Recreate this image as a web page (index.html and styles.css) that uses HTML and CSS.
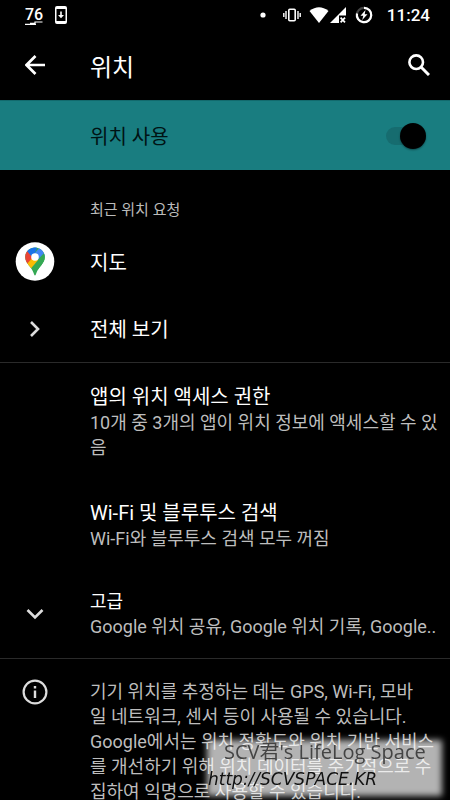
FILE: index.html
```html
<!DOCTYPE html>
<html lang="ko">
<head>
<meta charset="utf-8">
<meta name="viewport" content="width=device-width, initial-scale=1">
<title>위치</title>
<link rel="stylesheet" href="styles.css">
</head>
<body>
<div class="screen">
  <div class="status">
    <div class="status-group">
      <span class="battery">76
        <svg class="battery-mark" width="18" height="4" viewBox="0 0 18 4"><path d="M0 3.3H11M5 2.4H10V1H17.5" stroke="#fff" stroke-width="1.2" fill="none"/></svg>
      </span>
      <svg width="12" height="18" viewBox="0 0 12 18"><path fill="#fff" fill-rule="evenodd" d="M2 0H10Q12 0 12 2V16Q12 18 10 18H2Q0 18 0 16V2Q0 0 2 0ZM1.5 3V15H10.5V3Z"/><path fill="#fff" d="M5.2 5.5H6.8V9H9L6 12.2 3 9H5.2Z"/></svg>
    </div>
    <div class="status-group status-right">
      <svg class="icon-dot" width="6" height="6" viewBox="0 0 6 6"><circle cx="3" cy="3" r="2.6" fill="#fff"/></svg>
      <svg class="icon-vibrate" width="18" height="14" viewBox="0 0 18 14"><rect x="5.8" y="1.2" width="6.4" height="11.6" rx="1" fill="none" stroke="#fff" stroke-width="1.6"/><path d="M3 3V11M15 3V11M.8 5V9M17.2 5V9" stroke="#fff" stroke-width="1.4"/></svg>
      <svg class="icon-wifi" width="20" height="16" viewBox="0 0 20 16"><path d="M.5 4Q10-3.5 19.5 4L10 16Z" fill="#fff"/></svg>
      <svg class="icon-signal" width="16" height="16" viewBox="0 0 16 16"><path d="M0 16 16 0V8.5H9V16Z" fill="#fff"/><path d="M10.6 10.6 15 15.4M15 10.6 10.6 15.4" stroke="#fff" stroke-width="1.7"/></svg>
      <svg class="icon-charge" width="18" height="18" viewBox="0 0 18 18"><circle cx="9" cy="9" r="7.2" fill="none" stroke="#444" stroke-width="2.2"/><path d="M9 1.8A7.2 7.2 0 1 1 2 7.5" fill="none" stroke="#fff" stroke-width="2.2"/><path d="M10.5 4 5.5 9.8H8.3L7.2 14 12.5 8.2H9.7Z" fill="#fff"/></svg>
      <time class="clock">11:24</time>
    </div>
  </div>

  <header class="toolbar">
    <button class="icon-button" type="button" aria-label="뒤로">
      <svg width="20" height="20" viewBox="0 0 20 20"><path d="M20 10H2M10.5 1 1.5 10 10.5 19" fill="none" stroke="#fff" stroke-width="2.7"/></svg>
    </button>
    <h1>위치</h1>
    <button class="icon-button search" type="button" aria-label="검색">
      <svg width="22" height="22" viewBox="0 0 22 22"><circle cx="8.2" cy="8.2" r="6.8" fill="none" stroke="#fff" stroke-width="2.6"/><path d="M13 13 21 21" stroke="#fff" stroke-width="3"/></svg>
    </button>
  </header>

  <label class="banner">
    <span class="title">위치 사용</span>
    <input class="switch" type="checkbox" role="switch" checked>
  </label>

  <main>
    <h2 class="category">최근 위치 요청</h2>
    <a class="row" href="#maps">
      <span class="lead">
        <svg width="40" height="40" viewBox="0 0 40 40"><circle cx="20" cy="19.5" r="19.3" fill="#fff"/>
          <clipPath id="pin"><path d="M20 5.5C14.4 5.5 10.2 9.8 10.2 15.1C10.2 18.3 11.6 20.6 13.5 23C15.7 25.8 17.8 28.2 18.8 31.6C19.1 32.7 19.4 33.5 20 33.5S20.9 32.7 21.2 31.6C22.2 28.2 24.3 25.8 26.5 23C28.4 20.6 29.8 18.3 29.8 15.1C29.8 9.8 25.6 5.5 20 5.5Z"/></clipPath>
          <g clip-path="url(#pin)"><path fill="#34a853" d="M9 5H31V34H9Z"/><path fill="#fbbc04" d="M9 23 18 12 23.5 17.5 13 30Z"/><path fill="#ea4335" d="M9 7 13 8.5 19 14 11.5 22.5 8 19Z"/><path fill="#1a73e8" d="M12 9 14 4H23L19 13 17 15Z"/><path fill="#4285f4" d="M17 14.5 24.5 5.5 32 8V11L25 19Z"/><path fill="#34a853" d="M23 17.5 29.1 11 31 18 23 29Z"/></g>
          <circle cx="20" cy="15" r="3.8" fill="#fff"/>
        </svg>
      </span>
      <span class="title">지도</span>
    </a>
    <a class="row" href="#all">
      <span class="lead"><svg width="10" height="16" viewBox="0 0 10 16"><path d="M1 1 8 8 1 15" fill="none" stroke="#ddd" stroke-width="2.6"/></svg></span>
      <span class="title">전체 보기</span>
    </a>
    <hr>
    <a class="row tall" href="#permission">
      <span class="lead"></span>
      <span class="text"><span class="title">앱의 위치 액세스 권한</span><span class="summary">10개 중 3개의 앱이 위치 정보에 액세스할 수 있음</span></span>
    </a>
    <a class="row tall" href="#scan">
      <span class="lead"></span>
      <span class="text"><span class="title">Wi-Fi 및 블루투스 검색</span><span class="summary">Wi-Fi와 블루투스 검색 모두 꺼짐</span></span>
    </a>
    <button class="row advanced" type="button">
      <span class="lead"><svg width="18" height="11" viewBox="0 0 18 11"><path d="M1.5 1 9 8.5 16.5 1" fill="none" stroke="#ddd" stroke-width="2.6"/></svg></span>
      <span class="text"><span class="subtitle">고급</span><span class="summary">Google 위치 공유, Google 위치 기록, Google..</span></span>
    </button>
    <hr>
    <section class="row info">
      <span class="lead"><svg width="26" height="26" viewBox="0 0 26 26"><circle cx="13" cy="13" r="11.4" fill="none" stroke="#ddd" stroke-width="2.2"/><path d="M13 11.5V19M13 7V9.4" stroke="#ddd" stroke-width="2.4"/></svg></span>
      <p class="summary">기기 위치를 추정하는 데는 GPS, Wi-Fi, 모바<br>일 네트워크, 센서 등이 사용될 수 있습니다.<br>Google에서는 위치 정확도와 위치 기반 서비스<br>를 개선하기 위해 위치 데이터를 주기적으로 수<br>집하여 익명으로 사용할 수 있습니다.</p>
    </section>
  </main>

  <div class="watermark">
    <span class="mark-name">SCV君's LifeLog Space</span>
    <span class="mark-url">http://SCVSPACE.KR</span>
  </div>
</div>
</body>
</html>
```

FILE: styles.css
```css
* {
  box-sizing: border-box;
}

body {
  margin: 0;
  background: #000;
  color: #fff;
  font-family: Roboto, "Noto Sans CJK KR", sans-serif;
}

.screen {
  min-height: 100vh;
}

h1, h2, p {
  margin: 0;
  font-weight: 400;
}

button {
  border: 0;
  padding: 0;
  background: none;
  color: inherit;
  font: inherit;
  text-align: left;
}

svg {
  display: block;
  flex: none;
}

.status {
  display: flex;
  justify-content: space-between;
  height: 30px;
  padding: 0 20px 0 25px;
}

.status-group {
  display: flex;
  align-items: center;
  gap: 12px;
}

.status-right {
  gap: 0;
}

.battery {
  position: relative;
  font-size: 16px;
  font-weight: 500;
  line-height: 28px;
}

.battery-mark {
  position: absolute;
  left: 0;
  bottom: 4px;
}

.icon-dot { margin-right: 17px; }
.icon-vibrate { margin-right: 8px; }
.icon-wifi { margin-right: 1px; }
.icon-signal { margin-right: 9px; }
.icon-charge { margin-right: 14px; }

.clock {
  font-size: 17px;
  font-weight: 500;
}

.toolbar {
  display: flex;
  align-items: center;
  height: 70px;
  padding: 0 20px 0 25px;
}

.icon-button {
  display: flex;
  align-items: center;
  width: 65px;
  height: 48px;
}

.search {
  justify-content: flex-end;
  margin-left: auto;
}

h1 {
  font-size: 24px;
}

.banner {
  display: flex;
  align-items: center;
  justify-content: space-between;
  height: 70px;
  padding: 0 24px 0 90px;
  border-top: 1px solid #126a6d;
  background: #197d80;
  color: #001314;
}

.switch {
  appearance: none;
  display: flex;
  align-items: center;
  justify-content: flex-end;
  width: 40px;
  height: 18px;
  margin: 0;
  border-radius: 9px;
  background: #166c6f;
}

.switch::before {
  content: "";
  width: 26px;
  height: 26px;
  flex: none;
  border-radius: 50%;
  background: #000;
  box-shadow: 0 1px 2px #0006;
}

.category {
  padding: 29px 20px 7px 90px;
  color: #bbb;
  font-size: 15px;
  line-height: 22px;
}

.row {
  display: flex;
  align-items: center;
  width: 100%;
  min-height: 67px;
  padding-right: 12px;
  color: inherit;
  text-decoration: none;
}

.lead {
  display: flex;
  justify-content: center;
  flex: none;
  width: 70px;
  margin-right: 20px;
}

.text {
  flex: 1;
  min-width: 0;
}

.title {
  display: block;
  padding-top: 2px;
  font-size: 20px;
  line-height: 26px;
}

.subtitle {
  display: block;
  font-size: 18px;
  line-height: 24px;
}

.summary {
  display: block;
  color: #bdbdbd;
  font-size: 18px;
  line-height: 25px;
}

hr {
  height: 1px;
  margin: 0;
  border: 0;
  background: #2a2a2a;
}

.tall {
  padding-top: 19px;
  padding-bottom: 19px;
}

.advanced {
  min-height: 88px;
}

.advanced .summary {
  white-space: nowrap;
}

.info {
  align-items: flex-start;
  padding-top: 20px;
}

.info .summary {
  white-space: nowrap;
}

.watermark {
  position: fixed;
  right: 6px;
  bottom: 2px;
  display: flex;
  flex-direction: column;
  width: 239px;
  height: 60px;
  isolation: isolate;
  white-space: nowrap;
}

.watermark::before {
  content: "";
  position: absolute;
  inset: 2px;
  z-index: -1;
  background: #ffffffb3;
  filter: blur(3px);
}

.mark-name {
  padding-left: 19px;
  color: #444;
  font-family: "Open Sans", "Noto Sans CJK KR", sans-serif;
  font-size: 20px;
  line-height: 28px;
}

.mark-url {
  padding-left: 3px;
  color: #111;
  font-family: "DejaVu Sans", sans-serif;
  font-size: 17px;
  font-style: italic;
  line-height: 26px;
}
```
